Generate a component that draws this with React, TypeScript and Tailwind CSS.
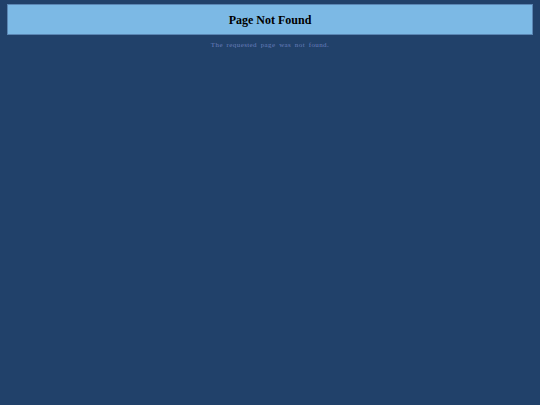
export default function App() {
  return (
    <div
      className="min-h-[405px] bg-[#21416a] px-[7px] pt-[4px]"
      style={{ fontFamily: '"Liberation Serif", "Times New Roman", serif' }}
    >
      <div className="flex h-[31px] items-center justify-center border border-[#5a86b4] bg-[#7cb9e5]">
        <h1 className="text-[12px] font-bold text-black">Page Not Found</h1>
      </div>
      <p className="mt-[5px] text-center text-[7px] leading-[10px] tracking-[0.4px] text-[#687ebc] [word-spacing:1.5px]">
        The requested page was not found.
      </p>
    </div>
  );
}
